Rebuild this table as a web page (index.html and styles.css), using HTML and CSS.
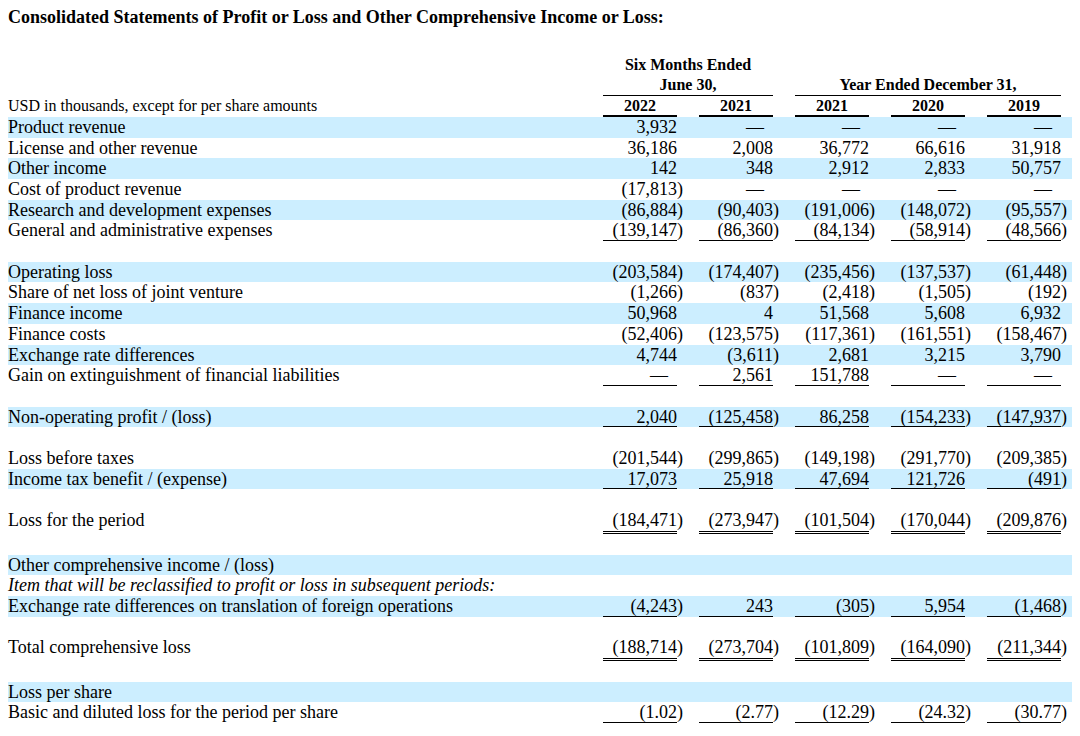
FILE: index.html
```html
<!DOCTYPE html>
<html lang="en">
<head>
<meta charset="utf-8">
<title>Consolidated Statements of Profit or Loss</title>
<link rel="stylesheet" href="styles.css">
</head>
<body>
<div class="title">Consolidated Statements of Profit or Loss and Other Comprehensive Income or Loss:</div>
<table class="fin">
  <colgroup>
    <col class="c-lbl">
    <col class="c-sp"><col class="c-v"><col class="c-p">
    <col class="c-sp"><col class="c-v"><col class="c-p">
    <col class="c-sp"><col class="c-v"><col class="c-p">
    <col class="c-sp"><col class="c-v"><col class="c-p">
    <col class="c-sp"><col class="c-v"><col class="c-p">
    <col class="c-end">
  </colgroup>
  <tbody>
    <tr class="hrow"><td class="lbl"></td><td></td><td class="hd" colspan="4">Six Months Ended</td><td colspan="11"></td></tr>
    <tr class="hrow"><td class="lbl"></td><td></td><td class="hd hl1" colspan="4">June 30,</td><td></td><td></td><td class="hd hl1" colspan="7">Year Ended December 31,</td><td></td><td></td></tr>
    <tr class="hrow"><td class="lbl">USD in thousands, except for per share amounts</td><td></td><td class="hd hl2">2022</td><td></td><td></td><td class="hd hl2">2021</td><td></td><td></td><td class="hd hl2">2021</td><td></td><td></td><td class="hd hl2">2020</td><td></td><td></td><td class="hd hl2">2019</td><td></td><td></td></tr>

    <tr class="hl"><td class="lbl">Product revenue</td><td></td><td class="v">3,932</td><td></td><td></td><td class="v dash">—</td><td></td><td></td><td class="v dash">—</td><td></td><td></td><td class="v dash">—</td><td></td><td></td><td class="v dash">—</td><td></td><td></td></tr>
    <tr><td class="lbl">License and other revenue</td><td></td><td class="v">36,186</td><td></td><td></td><td class="v">2,008</td><td></td><td></td><td class="v">36,772</td><td></td><td></td><td class="v">66,616</td><td></td><td></td><td class="v">31,918</td><td></td><td></td></tr>
    <tr class="hl"><td class="lbl">Other income</td><td></td><td class="v">142</td><td></td><td></td><td class="v">348</td><td></td><td></td><td class="v">2,912</td><td></td><td></td><td class="v">2,833</td><td></td><td></td><td class="v">50,757</td><td></td><td></td></tr>
    <tr><td class="lbl">Cost of product revenue</td><td></td><td class="v">(17,813</td><td class="p">)</td><td></td><td class="v dash">—</td><td></td><td></td><td class="v dash">—</td><td></td><td></td><td class="v dash">—</td><td></td><td></td><td class="v dash">—</td><td></td><td></td></tr>
    <tr class="hl"><td class="lbl">Research and development expenses</td><td></td><td class="v">(86,884</td><td class="p">)</td><td></td><td class="v">(90,403</td><td class="p">)</td><td></td><td class="v">(191,006</td><td class="p">)</td><td></td><td class="v">(148,072</td><td class="p">)</td><td></td><td class="v">(95,557</td><td class="p">)</td><td></td></tr>
    <tr><td class="lbl">General and administrative expenses</td><td></td><td class="v u">(139,147</td><td class="p">)</td><td></td><td class="v u">(86,360</td><td class="p">)</td><td></td><td class="v u">(84,134</td><td class="p">)</td><td></td><td class="v u">(58,914</td><td class="p">)</td><td></td><td class="v u">(48,566</td><td class="p">)</td><td></td></tr>
    <tr class="blank"><td colspan="17"></td></tr>

    <tr class="hl"><td class="lbl">Operating loss</td><td></td><td class="v">(203,584</td><td class="p">)</td><td></td><td class="v">(174,407</td><td class="p">)</td><td></td><td class="v">(235,456</td><td class="p">)</td><td></td><td class="v">(137,537</td><td class="p">)</td><td></td><td class="v">(61,448</td><td class="p">)</td><td></td></tr>
    <tr><td class="lbl">Share of net loss of joint venture</td><td></td><td class="v">(1,266</td><td class="p">)</td><td></td><td class="v">(837</td><td class="p">)</td><td></td><td class="v">(2,418</td><td class="p">)</td><td></td><td class="v">(1,505</td><td class="p">)</td><td></td><td class="v">(192</td><td class="p">)</td><td></td></tr>
    <tr class="hl"><td class="lbl">Finance income</td><td></td><td class="v">50,968</td><td></td><td></td><td class="v">4</td><td></td><td></td><td class="v">51,568</td><td></td><td></td><td class="v">5,608</td><td></td><td></td><td class="v">6,932</td><td></td><td></td></tr>
    <tr><td class="lbl">Finance costs</td><td></td><td class="v">(52,406</td><td class="p">)</td><td></td><td class="v">(123,575</td><td class="p">)</td><td></td><td class="v">(117,361</td><td class="p">)</td><td></td><td class="v">(161,551</td><td class="p">)</td><td></td><td class="v">(158,467</td><td class="p">)</td><td></td></tr>
    <tr class="hl"><td class="lbl">Exchange rate differences</td><td></td><td class="v">4,744</td><td></td><td></td><td class="v">(3,611</td><td class="p">)</td><td></td><td class="v">2,681</td><td></td><td></td><td class="v">3,215</td><td></td><td></td><td class="v">3,790</td><td></td><td></td></tr>
    <tr><td class="lbl">Gain on extinguishment of financial liabilities</td><td></td><td class="v u dash">—</td><td></td><td></td><td class="v u">2,561</td><td></td><td></td><td class="v u">151,788</td><td></td><td></td><td class="v u dash">—</td><td></td><td></td><td class="v u dash">—</td><td></td><td></td></tr>
    <tr class="blank"><td colspan="17"></td></tr>

    <tr class="hl"><td class="lbl">Non-operating profit / (loss)</td><td></td><td class="v u">2,040</td><td></td><td></td><td class="v u">(125,458</td><td class="p">)</td><td></td><td class="v u">86,258</td><td></td><td></td><td class="v u">(154,233</td><td class="p">)</td><td></td><td class="v u">(147,937</td><td class="p">)</td><td></td></tr>
    <tr class="blank"><td colspan="17"></td></tr>

    <tr><td class="lbl">Loss before taxes</td><td></td><td class="v">(201,544</td><td class="p">)</td><td></td><td class="v">(299,865</td><td class="p">)</td><td></td><td class="v">(149,198</td><td class="p">)</td><td></td><td class="v">(291,770</td><td class="p">)</td><td></td><td class="v">(209,385</td><td class="p">)</td><td></td></tr>
    <tr class="hl"><td class="lbl">Income tax benefit / (expense)</td><td></td><td class="v u">17,073</td><td></td><td></td><td class="v u">25,918</td><td></td><td></td><td class="v u">47,694</td><td></td><td></td><td class="v u">121,726</td><td></td><td></td><td class="v u">(491</td><td class="p">)</td><td></td></tr>
    <tr class="blank"><td colspan="17"></td></tr>

    <tr><td class="lbl">Loss for the period</td><td></td><td class="v uu">(184,471</td><td class="p">)</td><td></td><td class="v uu">(273,947</td><td class="p">)</td><td></td><td class="v uu">(101,504</td><td class="p">)</td><td></td><td class="v uu">(170,044</td><td class="p">)</td><td></td><td class="v uu">(209,876</td><td class="p">)</td><td></td></tr>
    <tr class="blank"><td colspan="17"></td></tr>

    <tr class="hl"><td class="lbl">Other comprehensive income / (loss)</td><td colspan="16"></td></tr>
    <tr><td class="lbl it" colspan="2">Item that will be reclassified to profit or loss in subsequent periods:</td><td colspan="15"></td></tr>
    <tr class="hl"><td class="lbl">Exchange rate differences on translation of foreign operations</td><td></td><td class="v u">(4,243</td><td class="p">)</td><td></td><td class="v u">243</td><td></td><td></td><td class="v u">(305</td><td class="p">)</td><td></td><td class="v u">5,954</td><td></td><td></td><td class="v u">(1,468</td><td class="p">)</td><td></td></tr>
    <tr class="blank"><td colspan="17"></td></tr>

    <tr><td class="lbl">Total comprehensive loss</td><td></td><td class="v uu">(188,714</td><td class="p">)</td><td></td><td class="v uu">(273,704</td><td class="p">)</td><td></td><td class="v uu">(101,809</td><td class="p">)</td><td></td><td class="v uu">(164,090</td><td class="p">)</td><td></td><td class="v uu">(211,344</td><td class="p">)</td><td></td></tr>
    <tr class="blank"><td colspan="17"></td></tr>

    <tr class="hl"><td class="lbl">Loss per share</td><td colspan="16"></td></tr>
    <tr><td class="lbl">Basic and diluted loss for the period per share</td><td></td><td class="v u">(1.02</td><td class="p">)</td><td></td><td class="v u">(2.77</td><td class="p">)</td><td></td><td class="v u">(12.29</td><td class="p">)</td><td></td><td class="v u">(24.32</td><td class="p">)</td><td></td><td class="v u">(30.77</td><td class="p">)</td><td></td></tr>
  </tbody>
</table>
</body>
</html>
```

FILE: styles.css
```css
html, body {
  background: #ffffff;
}

body {
  margin: 0;
  padding: 7px 8px 0 8px;
  font-family: "Liberation Serif", "Times New Roman", serif;
  font-size: 18px;
  color: #000000;
}

.title {
  font-weight: bold;
  line-height: 20.7px;
  margin-bottom: 27px;
  white-space: nowrap;
}

.fin {
  width: 1064px;
  table-layout: fixed;
  border-collapse: separate;
  border-spacing: 0;
  line-height: 20.7px;
}

.c-lbl { width: 580px; }
.c-sp { width: 15px; }
.c-v { width: 74px; }
.c-p { width: 7px; }
.c-end { width: 4px; }

.fin td {
  padding: 0;
  vertical-align: top;
  white-space: nowrap;
  height: 20.7px;
}

.fin tr.hrow td {
  font-size: 16px;
  vertical-align: bottom;
}

.fin tr.hl td {
  background: #cceeff;
}

.fin td.lbl {
  text-align: left;
  overflow: visible;
}

.fin td.it {
  font-style: italic;
}

.fin td.hd {
  font-weight: bold;
  text-align: center;
}

.fin td.hl1 {
  box-shadow: inset 0 -1px 0 #000000;
}

.fin td.hl2 {
  box-shadow: inset 0 -2px 0 #000000;
}

.fin td.v {
  text-align: right;
}

.fin td.dash {
  padding-right: 9px;
}

.fin td.p {
  text-align: left;
}

.fin td.u {
  box-shadow: inset 0 -1px 0 #000000;
}

.fin td.uu {
  border-bottom: 3px double #000000;
}
```
